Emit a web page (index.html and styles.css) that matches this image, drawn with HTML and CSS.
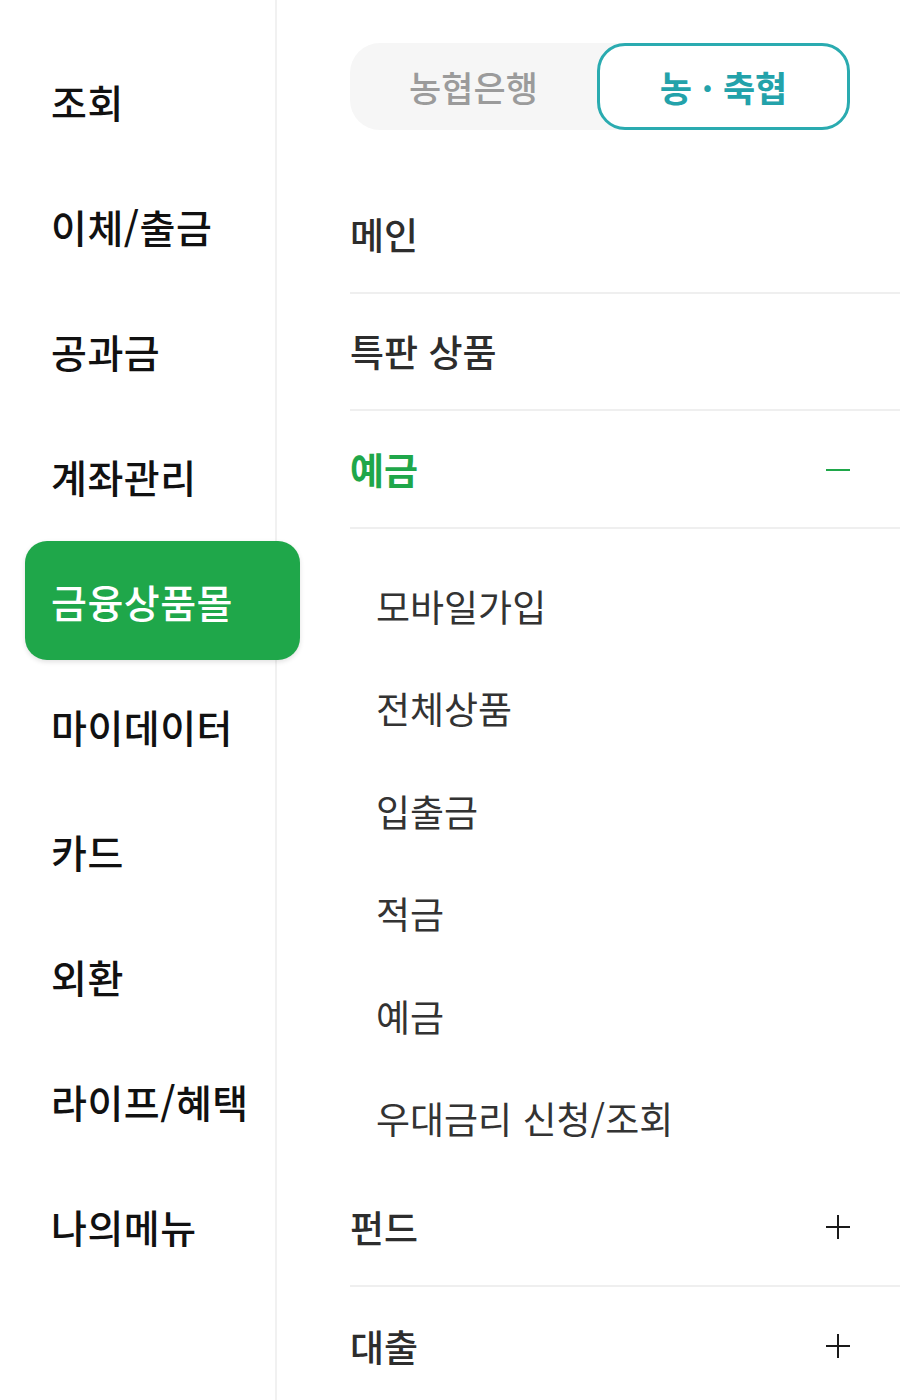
FILE: index.html
```html
<!DOCTYPE html>
<html lang="ko">
<head>
<meta charset="utf-8">
<link rel="stylesheet" href="styles.css">
</head>
<body>
<div class="page">
  <nav class="side">
    <div class="side-item">조회</div>
    <div class="side-item">이체/출금</div>
    <div class="side-item">공과금</div>
    <div class="side-item">계좌관리</div>
    <div class="side-item active">금융상품몰</div>
    <div class="side-item">마이데이터</div>
    <div class="side-item">카드</div>
    <div class="side-item">외환</div>
    <div class="side-item">라이프/혜택</div>
    <div class="side-item">나의메뉴</div>
  </nav>
  <main class="content">
    <div class="tabs">
      <div class="tab">농협은행</div>
      <div class="tab tab-on">농 · 축협</div>
    </div>
    <ul class="menu">
      <li class="row"><span>메인</span></li>
      <li class="row"><span>특판 상품</span></li>
      <li class="row open"><span>예금</span><span class="minus"></span></li>
      <li class="subs">
        <div class="sub">모바일가입</div>
        <div class="sub">전체상품</div>
        <div class="sub">입출금</div>
        <div class="sub">적금</div>
        <div class="sub">예금</div>
        <div class="sub">우대금리 신청/조회</div>
      </li>
      <li class="row after-subs"><span>펀드</span><span class="plus"></span></li>
      <li class="row last"><span>대출</span><span class="plus"></span></li>
    </ul>
  </main>
</div>
</body>
</html>
```
FILE: styles.css
```css
* { box-sizing: border-box; }
html, body { margin: 0; padding: 0; background: #fff; }
body {
  font-family: "Noto Sans CJK KR", "Noto Sans", sans-serif;
  color: #222;
  width: 900px;
  height: 1400px;
  overflow: hidden;
}
.page { display: flex; height: 1400px; }
.side {
  width: 277px;
  flex: none;
  border-right: 2px solid #f1f1f1;
  padding-top: 41px;
  display: flex;
  flex-direction: column;
  gap: 6px;
}
.side-item {
  width: 275px;
  height: 119px;
  margin-left: 25px;
  padding-left: 26px;
  display: flex;
  align-items: center;
  font-size: 39px;
  font-weight: 500;
  letter-spacing: 0.5px;
  color: #111;
  position: relative;
  z-index: 1;
}
.side-item.active {
  background: #1fa74a;
  color: #fff;
  border-radius: 22px;
  box-shadow: 0 2px 5px rgba(0,0,0,0.12);
}
.content {
  flex: 1;
  padding-left: 73px;
  padding-top: 43px;
}
.tabs {
  width: 500px;
  height: 87px;
  background: #f6f6f6;
  border-radius: 30px;
  display: flex;
}
.tab {
  flex: 1;
  display: flex;
  align-items: center;
  justify-content: center;
  font-size: 35px;
  font-weight: 500;
  color: #9b9b9b;
  border-radius: 28px;
}
.tab-on {
  background: #fff;
  border: 3px solid #2aabb0;
  color: #23a2aa;
  font-weight: 700;
}
.menu { list-style: none; margin: 46px 0 0; padding: 0; }
.row {
  height: 117.5px;
  border-bottom: 2px solid #efefef;
  display: flex;
  align-items: center;
  justify-content: space-between;
  padding-right: 50px;
  font-size: 37px;
  font-weight: 500;
  color: #2d2d2d;
}
.row.last { border-bottom: none; }
.row.open { color: #1fa74a; font-weight: 700; }
.minus, .plus { width: 24px; height: 24px; position: relative; }
.minus::before, .plus::before, .plus::after {
  content: "";
  position: absolute;
  background: #1a1a1a;
}
.minus::before { left: 0; right: 0; top: 12px; height: 2px; background: #1fa74a; }
.plus::before { left: 0; right: 0; top: 11px; height: 2px; }
.plus::after { top: 0; bottom: 0; left: 11px; width: 2px; }
.subs { padding-top: 26px; }
.sub {
  height: 102.5px;
  display: flex;
  align-items: center;
  padding-left: 26px;
  font-size: 37px;
  font-weight: 400;
  color: #333;
}
```
